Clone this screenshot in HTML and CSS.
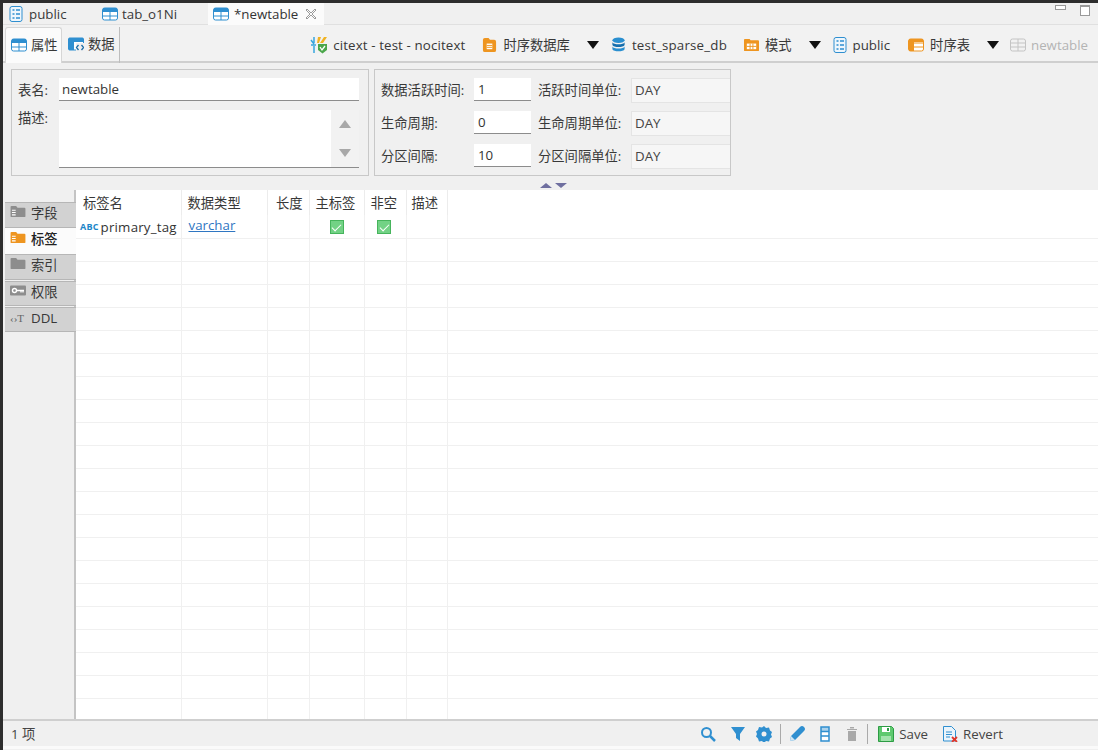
FILE: index.html
```html
<!DOCTYPE html>
<html lang="zh">
<head>
<meta charset="utf-8">
<title>newtable</title>
<link rel="stylesheet" href="styles.css">
</head>
<body>
<svg class="defs" width="0" height="0">
  <symbol id="tbl" viewBox="0 0 16 14"><rect x=".5" y="1" width="15" height="12" rx="2" fill="#fff" stroke="#2f8fd0"/><rect x="1" y="1" width="14" height="4" fill="#2f8fd0"/><path d="M8 5v8M1 9h14" stroke="#2f8fd0"/></symbol>
  <symbol id="doc" viewBox="0 0 14 16"><rect x="1" y=".5" width="12" height="15" rx="2" fill="#eef6fc" stroke="#2f8fd0"/><path d="M3.500 4h2M3.500 8h2M3.500 12h2M7 4h4M7 8h4M7 12h4" stroke="#2f8fd0" stroke-width="1.500"/></symbol>
  <symbol id="otbl" viewBox="0 0 16 14"><rect x=".5" y="1" width="15" height="12" rx="2" fill="#fff" stroke="#ee9520"/><rect x="1" y="1" width="5" height="12" fill="#ee9520"/><path d="M6 5h9M6 9h9" stroke="#ee9520"/><rect x="1" y="1" width="14" height="3" fill="#ee9520"/></symbol>
  <symbol id="folder" viewBox="0 0 16 14"><path d="M0 2a1 1 0 0 1 1-1h5l1.500 2H15a1 1 0 0 1 1 1v8a1 1 0 0 1-1 1H1a1 1 0 0 1-1-1z" fill="currentColor"/></symbol>
  <symbol id="folderdoc" viewBox="0 0 16 14"><path d="M0 2a1 1 0 0 1 1-1h5l1.500 2H15a1 1 0 0 1 1 1v8a1 1 0 0 1-1 1H1a1 1 0 0 1-1-1z" fill="currentColor"/><path d="M1.500 5h4v1.200h-4zM1.500 7.500h4v1.200h-4zM1.500 10h4v1.200h-4z" fill="#fff"/></symbol>
</svg>

<header class="tabstrip">
  <div class="doc-tab tab-first"><svg class="ic-doc"><use href="#doc"/></svg><span>public</span></div>
  <div class="doc-tab tab-second"><svg class="ic-tbl"><use href="#tbl"/></svg><span>tab_o1Ni</span></div>
  <div class="doc-tab doc-active"><svg class="ic-tbl"><use href="#tbl"/></svg><span>*newtable</span>
    <svg class="close" viewBox="0 0 12 12"><path d="M2 1l4 4 4-4 1 1-4 4 4 4-1 1-4-4-4 4-1-1 4-4-4-4z" fill="#fff" stroke="#9a9a9a"/></svg>
  </div>
  <div class="winbtns"><span class="win-min"></span><span class="win-max"></span></div>
</header>

<nav class="toolbar">
  <div class="sub-tab sub-active"><svg class="ic-tbl"><use href="#tbl"/></svg><span>属性</span></div>
  <div class="sub-tab sub-second"><svg class="ic-tbl" viewBox="0 0 16 14"><rect x=".5" y="1" width="15" height="12" rx="1" fill="#fff" stroke="#2f8fd0"/><rect x="1" y="1" width="14" height="4" fill="#2f8fd0"/><rect x="1" y="5" width="5" height="8" fill="#2f8fd0"/><rect x="8" y="6" width="8" height="8" fill="#f0f0f0"/><path d="M10.500 8 8.500 10.500l2 2.500M13.500 8l2 2.500-2 2.500" stroke="#1f6fa8" stroke-width="1.300" fill="none"/></svg><span>数据</span></div>
  <div class="crumbs">
    <div class="crumb crumb-conn"><svg class="ic-conn" viewBox="0 0 18 18"><path d="M4 1v6M1 4l3 4M1 9h5M4 10v7" stroke="#37a6de" stroke-width="1.500" fill="none"/><path d="M8 1h3L9 7H7z" fill="#f0b323"/><path d="M14 1h3l-4 6h-3z" fill="#f0b323"/><path d="M8 8h9v6l-4.500 3.500L8 14z" fill="#4aa64a"/><path d="m10 11 2 3 3-4" stroke="#fff" stroke-width="1.300" fill="none"/></svg><span>citext - test - nocitext</span></div>
    <div class="crumb crumb-tight"><svg class="ic-small" viewBox="0 0 14 16"><path d="M0 3a2 2 0 0 1 2-2h4l1.500 2H12a2 2 0 0 1 2 2v9a2 2 0 0 1-2 2H2a2 2 0 0 1-2-2z" fill="#ee9520"/><path d="M4 7h6v6H4z" fill="#fff"/><path d="M4 9h6M4 11h6" stroke="#ee9520"/></svg><span>时序数据库</span><i class="tri"></i></div>
    <div class="crumb crumb-db"><svg class="ic-small" viewBox="0 0 14 16"><ellipse cx="7" cy="3.500" rx="6.500" ry="3" fill="#2a8fd0"/><path d="M.5 5.500c1 3 12 3 13 0v3c-1 3-12 3-13 0z" fill="#166fae"/><path d="M.5 10c1 3 12 3 13 0v3c-1 3-12 3-13 0z" fill="#2a8fd0"/></svg><span>test_sparse_db</span></div>
    <div class="crumb crumb-tight"><svg class="ic-small" viewBox="0 0 16 14"><path d="M0 2a1 1 0 0 1 1-1h5l1 1.500h8a1 1 0 0 1 1 1V13a1 1 0 0 1-1 1H1a1 1 0 0 1-1-1z" fill="#ee9520"/><path d="M3 6h10v6H3z" fill="#fff"/><path d="M6.500 6v6M9.500 6v6M3 9h10" stroke="#ee9520"/></svg><span>模式</span><i class="tri"></i></div>
    <div class="crumb crumb-public"><svg class="ic-doc"><use href="#doc"/></svg><span>public</span></div>
    <div class="crumb"><svg class="ic-tbl"><use href="#otbl"/></svg><span>时序表</span><i class="tri"></i></div>
    <div class="crumb crumb-off"><svg class="ic-tbl" viewBox="0 0 16 14"><rect x=".5" y="1" width="15" height="12" rx="2" fill="none" stroke="#c4c4c4"/><path d="M1 5h14M1 9h14M8 1v12" stroke="#c4c4c4"/></svg><span>newtable</span></div>
  </div>
</nav>

<section class="props">
  <div class="box box-left">
    <div class="name-row"><label>表名:</label><div class="field wide">newtable</div></div>
    <div class="desc-row"><label>描述:</label>
      <div class="area"><div class="scroll"><i class="up"></i><i class="down"></i></div></div>
    </div>
  </div>
  <div class="box box-right">
    <label>数据活跃时间:</label><div class="field num">1</div><label>活跃时间单位:</label><div class="combo">DAY</div>
    <label>生命周期:</label><div class="field num">0</div><label>生命周期单位:</label><div class="combo">DAY</div>
    <label>分区间隔:</label><div class="field num">10</div><label>分区间隔单位:</label><div class="combo">DAY</div>
  </div>
</section>
<div class="sash"><i class="sash-up"></i><i class="sash-down"></i></div>

<main class="main">
  <aside class="side">
    <div class="side-tab"><svg class="ic-side grey"><use href="#folderdoc"/></svg><span>字段</span></div>
    <div class="side-tab side-active"><svg class="ic-side orange"><use href="#folderdoc"/></svg><span>标签</span></div>
    <div class="side-tab"><svg class="ic-side grey"><use href="#folder"/></svg><span>索引</span></div>
    <div class="side-tab side-gap"><svg class="ic-side" viewBox="0 0 16 12"><rect y="1" width="16" height="10" rx="1" fill="#8d8d8d"/><circle cx="4.500" cy="6" r="2" fill="none" stroke="#fff" stroke-width="1.400"/><path d="M6.500 6H14M11 6v2M13 6v2" stroke="#fff" stroke-width="1.300"/></svg><span>权限</span></div>
    <div class="side-tab side-gap"><span class="ddl-ic">‹›T</span><span>DDL</span></div>
  </aside>
  <div class="grid-wrap">
    <table class="grid">
      <colgroup><col class="c1"><col class="c2"><col class="c3"><col class="c4"><col class="c5"><col class="c6"><col></colgroup>
      <thead><tr><th class="first">标签名</th><th>数据类型</th><th class="right">长度</th><th>主标签</th><th>非空</th><th class="last">描述</th><th></th></tr></thead>
      <tbody>
        <tr><td class="namecell"><span class="abc">ABC</span>primary_tag</td><td class="linkcell"><a class="link">varchar</a></td><td></td><td class="mid"><span class="check"></span></td><td class="mid mid-narrow"><span class="check"></span></td><td></td><td></td></tr>
        <tr><td></td><td></td><td></td><td></td><td></td><td></td><td></td></tr>
        <tr><td></td><td></td><td></td><td></td><td></td><td></td><td></td></tr>
        <tr><td></td><td></td><td></td><td></td><td></td><td></td><td></td></tr>
        <tr><td></td><td></td><td></td><td></td><td></td><td></td><td></td></tr>
        <tr><td></td><td></td><td></td><td></td><td></td><td></td><td></td></tr>
        <tr><td></td><td></td><td></td><td></td><td></td><td></td><td></td></tr>
        <tr><td></td><td></td><td></td><td></td><td></td><td></td><td></td></tr>
        <tr><td></td><td></td><td></td><td></td><td></td><td></td><td></td></tr>
        <tr><td></td><td></td><td></td><td></td><td></td><td></td><td></td></tr>
        <tr><td></td><td></td><td></td><td></td><td></td><td></td><td></td></tr>
        <tr><td></td><td></td><td></td><td></td><td></td><td></td><td></td></tr>
        <tr><td></td><td></td><td></td><td></td><td></td><td></td><td></td></tr>
        <tr><td></td><td></td><td></td><td></td><td></td><td></td><td></td></tr>
        <tr><td></td><td></td><td></td><td></td><td></td><td></td><td></td></tr>
        <tr><td></td><td></td><td></td><td></td><td></td><td></td><td></td></tr>
        <tr><td></td><td></td><td></td><td></td><td></td><td></td><td></td></tr>
        <tr><td></td><td></td><td></td><td></td><td></td><td></td><td></td></tr>
        <tr><td></td><td></td><td></td><td></td><td></td><td></td><td></td></tr>
        <tr><td></td><td></td><td></td><td></td><td></td><td></td><td></td></tr>
        <tr><td></td><td></td><td></td><td></td><td></td><td></td><td></td></tr>
        <tr><td></td><td></td><td></td><td></td><td></td><td></td><td></td></tr>
      </tbody>
    </table>
  </div>
</main>

<footer class="status">
  <span class="count">1 项</span>
  <div class="tools">
    <svg class="t t-search" viewBox="0 0 16 16"><circle cx="6.500" cy="6.500" r="4.500" fill="none" stroke="#2f8fd0" stroke-width="2"/><path d="m10 10 5 5" stroke="#2f8fd0" stroke-width="2.500"/></svg>
    <svg class="t" viewBox="0 0 16 16"><path d="M1 1h14L10 8v7L6 12V8z" fill="#2f8fd0"/></svg>
    <svg class="t t-gear" viewBox="0 0 16 16"><path d="M8 0l2 2 3-.5 1 3 2 1.500-1 2.500 1 2.500-2 1.500-1 3-3-.5-2 2-2-2-3 .5-1-3L0 10.500 1 8 0 5.500 2 4l1-3 3 .5z" fill="#2f8fd0"/><circle cx="8" cy="8" r="2.500" fill="#f0f0f0"/></svg>
    <i class="sep sep-first"></i>
    <svg class="t t-pencil" viewBox="0 0 16 16"><path d="M1 15l1-5L11 1a2 2 0 0 1 4 4l-9 9z" fill="#2f8fd0"/><path d="M2 10l4 4-5 1z" fill="#cfe6f5"/></svg>
    <svg class="t t-col" viewBox="0 0 16 16"><rect x="4" y="1" width="8" height="14" fill="#fff" stroke="#2f8fd0" stroke-width="1.500"/><path d="M4 5.500h8M4 10h8" stroke="#2f8fd0" stroke-width="1.500"/><rect x="4" y="1" width="8" height="4" fill="#2f8fd0" opacity=".4"/></svg>
    <svg class="t t-trash" viewBox="0 0 16 16"><path d="M3 3h10v1H3zM6 1h4v1.500H6zM4 5h8v10H4z" fill="#a9a9a9"/></svg>
    <i class="sep"></i>
    <div class="act"><svg class="t" viewBox="0 0 16 16"><path d="M.5.500h13l2 2v13H.5z" fill="#5fc96f" stroke="#2d9c45"/><rect x="4" y="1" width="8" height="5" fill="#fff"/><rect x="9" y="2" width="2" height="3" fill="#2d9c45"/><rect x="3" y="10" width="10" height="5" fill="#a4e3ad"/></svg><span>Save</span></div>
    <div class="act act-revert"><svg class="t" viewBox="0 0 16 16"><path d="M1.500.500h8l4 4V15h-12z" fill="#eaf4fb" stroke="#2f8fd0"/><path d="M4 6h6M4 8.500h6M4 11h4" stroke="#2f8fd0"/><path d="m10 11 5 5m0-5-5 5" stroke="#e0372b" stroke-width="1.800"/></svg><span>Revert</span></div>
  </div>
</footer>
</body>
</html>
```
FILE: styles.css
```css
* { box-sizing: border-box; }
html, body { margin: 0; height: 100%; }
body {
  width: 1098px; height: 750px; overflow: hidden;
  background: #f0f0f0;
  border-top: 3px solid #2d2d2d; border-left: 3px solid #2d2d2d;
  font: 13.3px/18px "Open Sans", "Noto Sans CJK SC", sans-serif;
  color: #383838;
  display: flex; flex-direction: column;
}
.defs { position: absolute; }
svg { flex: none; display: block; }
.ic-tbl { width: 16px; height: 14px; }
.ic-doc { width: 14px; height: 16px; }
.ic-small { width: 15px; height: 15px; }
.ic-conn { width: 18px; height: 18px; }

.tabstrip { height: 22px; display: flex; align-items: stretch; padding-left: 6px; border-bottom: 1px solid #e0e0e0; }
.doc-tab { display: flex; align-items: center; }
.tab-first { width: 93px; gap: 6px; }
.tab-second { width: 106px; gap: 4px; }
.doc-active { width: 116px; background: #fbfbfb; padding-left: 5px; gap: 5px; color: #333; margin-bottom: -1px; }
.close { width: 12px; height: 12px; margin-left: 2px; }
.winbtns { margin-left: auto; display: flex; gap: 14px; padding: 1px 8px 0 0; }
.win-min { width: 11px; height: 5px; margin-top: 1px; border: 1px solid #999; background: #fff; }
.win-max { width: 10px; height: 11px; margin-top: 1px; border: 1px solid #999; border-top-width: 2px; background: #fff; }

.toolbar { height: 38px; display: flex; align-items: flex-end; padding-left: 2px; border-bottom: 2px solid #cfcfcf; background: #f2f2f2; }
.sub-tab { height: 36px; width: 57px; display: flex; align-items: center; gap: 4px; padding-left: 6px; border-right: 1px solid #bdbdbd; margin-bottom: -2px; padding-bottom: 2px; }
.sub-active { background: #fbfbfb; border: 1px solid #d6d6d6; border-bottom: 0; border-radius: 3px 3px 0 0; padding-left: 5px; }
.sub-second { width: 58px; }
.crumbs { margin-left: auto; height: 100%; display: flex; align-items: center; gap: 17px; padding: 3px 10px 0 0; }
.crumb { display: flex; align-items: center; gap: 6px; white-space: nowrap; }
.crumb-conn { gap: 5px; letter-spacing: .13px; }
.crumb-tight { margin-right: -5px; }
.crumb-db span { letter-spacing: .2px; }
.crumb-public { margin-right: 1px; }
.crumb-off { color: #b4b4b4; gap: 5px; margin-left: -6px; }
.tri { width: 0; height: 0; margin-left: 11px; border: 6px solid transparent; border-top: 8px solid #111; border-bottom: 0; }

.props { display: flex; gap: 5px; padding: 6px 0 0 8px; }
.box { height: 107px; border: 1px solid #c8c8c8; background: #f0f0f0; }
.box-left { width: 358px; padding: 8px 9px 0 6px; }
.box-right { width: 357px; padding: 8px 0 0 6px; display: grid; grid-template-columns: 93px 57px 100px 99px; grid-auto-rows: 23px; row-gap: 10px; }
label { line-height: 24px; white-space: nowrap; }
.box-right label:nth-child(4n+3) { padding-left: 7px; }
.name-row, .desc-row { display: flex; }
.name-row label, .desc-row label { width: 41px; flex: none; }
.desc-row { margin-top: 8px; }
.desc-row label { line-height: 16px; }
.field { background: #fff; border-bottom: 1px solid #8c8c8c; padding: 0 3px; line-height: 23px; color: #333; height: 23px; }
.wide { flex: 1; }
.num { padding-left: 4px; }
.area { flex: 1; height: 58px; background: #fff; border-bottom: 1px solid #8c8c8c; display: flex; justify-content: flex-end; }
.scroll { width: 28px; background: #f2f2f2; display: flex; flex-direction: column; justify-content: space-between; align-items: center; padding: 10px 0 10px; }
.up, .down, .sash-up, .sash-down { width: 0; height: 0; border: 6px solid transparent; }
.up { border-top: 0; border-bottom: 8px solid #a8a8a8; }
.down { border-bottom: 0; border-top: 8px solid #a8a8a8; }
.combo { background: #f6f6f6; border: 1px solid #e4e4e4; border-right: 0; height: 25px; padding-left: 3px; line-height: 23px; color: #444; }

.sash { height: 14px; display: flex; gap: 3px; padding: 7px 0 0 537px; }
.sash-up { border-width: 0 6px 5px; border-bottom-color: #6f6f9f; }
.sash-down { border-width: 5px 6px 0; border-top-color: #6f6f9f; }

.main { height: 529px; display: flex; overflow: hidden; }
.side { width: 73px; flex: none; padding: 12px 0 0 2px; border-right: 2px solid #c4c4c4; background: #f0f0f0; }
.side-tab { height: 26px; display: flex; align-items: center; gap: 5px; padding: 0 0 4px 5px; background: #d2d2d2; border-top: 1px solid #b6b6b6; border-bottom: 1px solid #b6b6b6; margin-right: -2px; }
.side-gap { margin-top: 1px; height: 25px; padding-bottom: 3px; }
.side-active { background: #fbfbfb; border-color: #fbfbfb; font-weight: 500; color: #222; position: relative; }
.ic-side { width: 16px; height: 13px; margin-top: -3px; }
.grey { color: #8d8d8d; }
.orange { color: #ee9520; }
.ddl-ic { width: 16px; font: 11px/14px "Liberation Serif", serif; color: #666; white-space: nowrap; }
.grid-wrap { flex: 1; background: #fff; overflow: hidden; }
.grid { border-collapse: collapse; table-layout: fixed; width: 100%; }
.c1 { width: 105px; } .c2 { width: 86px; } .c3 { width: 42px; } .c4 { width: 55px; } .c5 { width: 42px; } .c6 { width: 41px; }
th { height: 25px; font-weight: 400; text-align: left; padding: 0 6px; border-right: 1px solid #ececec; background: #fff; }
th.first { padding-left: 7px; }
th.last { padding-left: 5px; }
th:last-child, td:last-child { border-right: 0; }
th.right { text-align: right; }
td { height: 23px; padding: 0 6px; border-right: 1px solid #f0f0f0; border-bottom: 1px solid #f0f0f0; white-space: nowrap; }
.namecell { padding: 2px 0 0 4px; color: #333; letter-spacing: .2px; }
.abc { font-size: 9px; font-weight: 700; color: #1c86c8; margin-right: 2px; vertical-align: 2px; letter-spacing: .2px; }
.linkcell { padding: 0 0 3px 7px; }
.link { color: #2f76c2; text-decoration: underline; }
.mid { text-align: center; padding: 0 0 2px; }
.mid-narrow { padding-right: 2px; }
.check { display: inline-block; width: 14px; height: 14px; vertical-align: middle; background: #72d285; border: 1px solid #46b45c; position: relative; }
.check::after { content: ""; position: absolute; left: 3.500px; top: 1px; width: 4px; height: 8px; border: solid #fff; border-width: 0 1.500px 1.500px 0; transform: rotate(45deg); }

.status { height: 30px; display: flex; align-items: center; padding-left: 8px; border-top: 2px solid #cfcfcf; border-bottom: 3px solid #fafafa; }
.count { color: #444; }
.tools { margin-left: auto; display: flex; align-items: center; gap: 10px; padding-right: 95px; }
.t { width: 16px; height: 16px; }
.t-search { margin-right: 4px; }
.t-gear { margin-right: -2px; }
.sep-first { margin-right: -2px; }
.t-pencil { margin-right: 2px; }
.t-col { margin-right: 1px; }
.t-trash { margin-right: -3px; }
.sep { width: 1px; height: 20px; background: #aaa; }
.act { display: flex; align-items: center; gap: 5px; color: #444; }
.act-revert { margin-left: 4px; }
```
